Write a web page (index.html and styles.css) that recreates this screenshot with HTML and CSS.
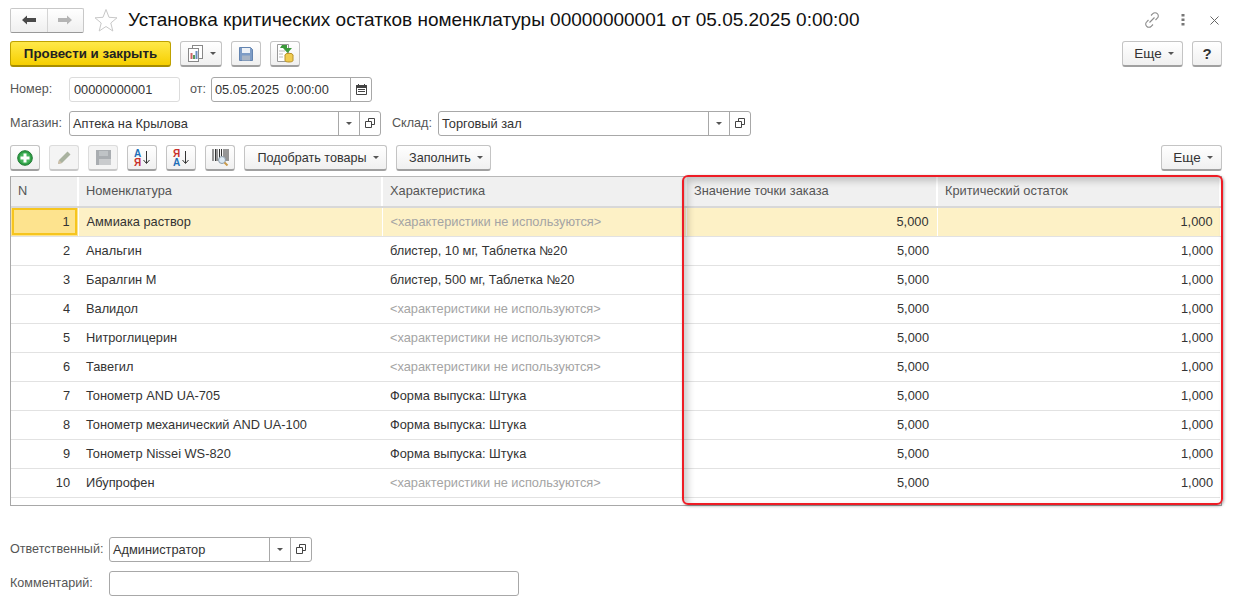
FILE: index.html
```html
<!DOCTYPE html>
<html lang="en">
<head>
  <meta charset="UTF-8">
  <title>Установка критических остатков номенклатуры</title>
  <link rel="stylesheet" href="styles.css">
</head>
<body>
<div class="page">
  <svg width="0" height="0" class="defs">
    <symbol id="open" viewBox="0 0 12 12"><path d="M4.500 4V1.500h6v6H8M1.500 4.500h6v6h-6z" fill="none" stroke="#444" stroke-width="1"/></symbol>
  </svg>

  <div class="titlebar">
    <div class="nav">
      <span class="nav-btn"><svg width="16" height="12" viewBox="0 0 16 12"><path d="M1 6l5-4.500V4h9v4H6v2.500z" fill="#4a4a4a"/></svg></span>
      <span class="nav-btn"><svg width="16" height="12" viewBox="0 0 16 12"><path d="M15 6l-5-4.500V4H1v4h9v2.500z" fill="#b4b4b4"/></svg></span>
    </div>
    <svg class="star" width="24" height="24" viewBox="0 0 24 24"><path d="M12 1.500l3 7.800 8 .5-6.200 5.200 2 8L12 18.500 5.200 23l2-8L1 9.800l8-.5z" fill="#fff" stroke="#c8c8c8"/></svg>
    <h1>Установка критических остатков номенклатуры 00000000001 от 05.05.2025 0:00:00</h1>
    <div class="window-icons">
      <svg class="link-icon" width="16" height="16" viewBox="0 0 16 16"><path d="M5.500 10.500l5-5M7 3.500l1.800-1.800a3 3 0 0 1 4.500 0 3 3 0 0 1 0 4.500L11.500 8M9 12.500l-1.800 1.800a3 3 0 0 1-4.500 0 3 3 0 0 1 0-4.500L4.500 8" fill="none" stroke="#8c8c8c" stroke-width="1.100"/></svg>
      <svg class="dots-icon" width="4" height="12" viewBox="0 0 4 12"><path d="M.500 0h3v2.500h-3zM.500 4.500h3V7h-3zM.500 9h3v2.500h-3z" fill="#777"/></svg>
      <svg class="close-icon" width="9" height="9" viewBox="0 0 9 9"><path d="M.500.500l8 8M8.500.500l-8 8" stroke="#666"/></svg>
    </div>
  </div>

  <div class="bar command-bar">
    <button class="btn primary">Провести и закрыть</button>
    <button class="btn icon-menu">
      <svg width="17" height="17" viewBox="0 0 17 17"><rect x="5.500" y=".5" width="10" height="13" fill="#fff" stroke="#888"/><rect x="1.500" y="3.500" width="10" height="13" fill="#fff" stroke="#888"/><path d="M3.500 8h2v6h-2z" fill="#c66"/><path d="M6 10h2v4H6z" fill="#5a9a5a"/><path d="M8.500 6h2v8h-2z" fill="#6a8ec0"/></svg>
      <i class="caret"></i>
    </button>
    <button class="btn icon-btn">
      <svg width="14" height="14" viewBox="0 0 14 14"><path d="M.5.500h11l2 2v11H.5z" fill="#7d9cc6" stroke="#6384b0"/><rect x="3" y="1" width="8" height="5" fill="#eef2f7"/><rect x="3" y="8.500" width="8" height="5" fill="#a8b4c4"/></svg>
    </button>
    <button class="btn icon-btn">
      <svg width="18" height="19" viewBox="0 0 18 19"><path d="M1.500.500h11v17h-11z" fill="#fff" stroke="#999"/><path d="M3 7h6M3 10h4M3 13h4" stroke="#bbb"/><path d="M6 1h5v3h5l-4.500 5L7 4H4z" fill="#3c9a3c"/><ellipse cx="13" cy="11" rx="4" ry="1.700" fill="#f0cc50" stroke="#b8922a"/><path d="M9 11v5.500c0 2 8 2 8 0V11" fill="#f0cc50" stroke="#b8922a"/></svg>
    </button>
    <div class="bar-right">
      <button class="btn more">Еще<i class="caret"></i></button>
      <button class="btn help">?</button>
    </div>
  </div>

  <div class="form-row number-row">
    <label class="label label-number">Номер:</label>
    <span class="field field-number">00000000001</span>
    <label class="label label-from">от:</label>
    <span class="field field-date">
      <span class="field-value">05.05.2025&nbsp; 0:00:00</span>
      <span class="field-btn date-btn"><svg width="11" height="11" viewBox="0 0 11 11"><path d="M.5 1.500h10v9H.5z" fill="#fff" stroke="#444"/><path d="M.5 1.500h10v2H.5zM2.500 0v2M8.500 0v2" fill="#444" stroke="#444"/><path d="M2 5h7v1H2zM2 7h7v1H2z" fill="#444"/></svg></span>
    </span>
  </div>

  <div class="form-row store-row">
    <label class="label label-store">Магазин:</label>
    <span class="field field-store">
      <span class="field-value">Аптека на Крылова</span>
      <span class="field-btn"><i class="caret"></i></span>
      <span class="field-btn"><svg width="12" height="12"><use href="#open"/></svg></span>
    </span>
    <label class="label label-stock">Склад:</label>
    <span class="field field-stock">
      <span class="field-value">Торговый зал</span>
      <span class="field-btn"><i class="caret"></i></span>
      <span class="field-btn"><svg width="12" height="12"><use href="#open"/></svg></span>
    </span>
  </div>

  <div class="bar table-bar">
    <button class="btn icon-btn">
      <svg width="16" height="16" viewBox="0 0 16 16"><circle cx="8" cy="8" r="7.300" fill="#2f9e46" stroke="#1f7a33"/><circle cx="8" cy="8" r="5.500" fill="#45b45c"/><path d="M6.500 3.500h3v3h3v3h-3v3h-3v-3h-3v-3h3z" fill="#fff"/></svg>
    </button>
    <button class="btn icon-btn disabled">
      <svg width="16" height="16" viewBox="0 0 16 16"><path d="M11.500 1.500l3 3-8.500 8.500-4 1 1-4z" fill="#a9b29f"/><path d="M2 14l1-4 3 3z" fill="#cfbfa8"/></svg>
    </button>
    <button class="btn icon-btn disabled">
      <svg width="15" height="15" viewBox="0 0 15 15"><path d="M0 0h15v15H0z" fill="#a9adb1"/><rect x="3" y="1" width="9" height="5" fill="#bfc3c6"/><rect x="3" y="9" width="12" height="6" fill="#c9cbcd"/></svg>
    </button>
    <button class="btn icon-btn sort">
      <span class="sort-letters"><b class="blue">А</b><b class="red">Я</b></span>
      <svg width="7" height="13" viewBox="0 0 7 13"><path d="M3.500 0v12M.5 9l3 3.500 3-3.500" fill="none" stroke="#333"/></svg>
    </button>
    <button class="btn icon-btn sort">
      <span class="sort-letters"><b class="red">Я</b><b class="blue">А</b></span>
      <svg width="7" height="13" viewBox="0 0 7 13"><path d="M3.500 0v12M.5 9l3 3.500 3-3.500" fill="none" stroke="#333"/></svg>
    </button>
    <button class="btn icon-btn">
      <svg width="17" height="17" viewBox="0 0 17 17"><path d="M1 0v12M3.500 0v12M5 0v12M7.500 0v9M9.500 0v7M12 0v8M14 0v12M16 0v12" stroke="#333" fill="none"/><circle cx="10" cy="11" r="3.500" fill="#dbe8f2" stroke="#8a9aa8"/><path d="M12.500 13.500l3 3" stroke="#c99a4a" stroke-width="2"/></svg>
    </button>
    <button class="btn text-btn pick">Подобрать товары<i class="caret"></i></button>
    <button class="btn text-btn fill">Заполнить<i class="caret"></i></button>
    <div class="bar-right">
      <button class="btn more">Еще<i class="caret"></i></button>
    </div>
  </div>

  <div class="table-wrap">
    <table class="grid">
      <colgroup>
        <col class="col-n"><col class="col-name"><col class="col-char"><col class="col-point"><col class="col-crit">
      </colgroup>
      <thead>
        <tr><th>N</th><th>Номенклатура</th><th>Характеристика</th><th>Значение точки заказа</th><th>Критический остаток</th></tr>
      </thead>
      <tbody>
        <tr class="current"><td class="num active">1</td><td>Аммиака раствор</td><td class="muted">&lt;характеристики не используются&gt;</td><td class="num">5,000</td><td class="num">1,000</td></tr>
        <tr><td class="num">2</td><td>Анальгин</td><td>блистер, 10 мг, Таблетка №20</td><td class="num">5,000</td><td class="num">1,000</td></tr>
        <tr><td class="num">3</td><td>Баралгин М</td><td>блистер, 500 мг, Таблетка №20</td><td class="num">5,000</td><td class="num">1,000</td></tr>
        <tr><td class="num">4</td><td>Валидол</td><td class="muted">&lt;характеристики не используются&gt;</td><td class="num">5,000</td><td class="num">1,000</td></tr>
        <tr><td class="num">5</td><td>Нитроглицерин</td><td class="muted">&lt;характеристики не используются&gt;</td><td class="num">5,000</td><td class="num">1,000</td></tr>
        <tr><td class="num">6</td><td>Тавегил</td><td class="muted">&lt;характеристики не используются&gt;</td><td class="num">5,000</td><td class="num">1,000</td></tr>
        <tr><td class="num">7</td><td>Тонометр AND UA-705</td><td>Форма выпуска: Штука</td><td class="num">5,000</td><td class="num">1,000</td></tr>
        <tr><td class="num">8</td><td>Тонометр механический AND UA-100</td><td>Форма выпуска: Штука</td><td class="num">5,000</td><td class="num">1,000</td></tr>
        <tr><td class="num">9</td><td>Тонометр Nissei WS-820</td><td>Форма выпуска: Штука</td><td class="num">5,000</td><td class="num">1,000</td></tr>
        <tr><td class="num">10</td><td>Ибупрофен</td><td class="muted">&lt;характеристики не используются&gt;</td><td class="num">5,000</td><td class="num">1,000</td></tr>
      </tbody>
    </table>
    <div class="highlight"></div>
  </div>

  <div class="form-row owner-row">
    <label class="label label-owner">Ответственный:</label>
    <span class="field field-owner">
      <span class="field-value">Администратор</span>
      <span class="field-btn"><i class="caret"></i></span>
      <span class="field-btn"><svg width="12" height="12"><use href="#open"/></svg></span>
    </span>
  </div>

  <div class="form-row comment-row">
    <label class="label label-owner">Комментарий:</label>
    <span class="field field-comment"></span>
  </div>
</div>
</body>
</html>
```

FILE: styles.css
```css
* {
  box-sizing: border-box;
  margin: 0;
  padding: 0;
}

html, body {
  height: 100%;
  background: #fff;
}

body {
  font-family: "Liberation Sans", Arial, sans-serif;
  font-size: 12.8px;
  color: #333;
  overflow: hidden;
}

.defs {
  display: block;
  height: 0;
}

.page {
  padding: 7px 17px 0 10px;
}

/* title */
.titlebar {
  display: flex;
  align-items: center;
  height: 26px;
}

.nav {
  display: flex;
  width: 74px;
  height: 25px;
  background: linear-gradient(#fff, #efefef);
  border: 1px solid #c8c8c8;
  border-bottom-color: #999;
  border-radius: 2px;
}

.nav-btn {
  flex: 1;
  display: flex;
  align-items: center;
  justify-content: center;
}

.nav-btn + .nav-btn {
  border-left: 1px solid #d4d4d4;
}

.star {
  margin-left: 10px;
}

h1 {
  margin-left: 10px;
  font-size: 19px;
  font-weight: normal;
  color: #111;
  white-space: nowrap;
}

.window-icons {
  display: flex;
  align-items: center;
  gap: 21px;
  margin-left: auto;
  padding-right: 3px;
}

.close-icon {
  margin-left: 4px;
}

/* buttons */
.bar {
  display: flex;
  align-items: center;
  height: 26px;
}

.bar-right {
  display: flex;
  gap: 9px;
  margin-left: auto;
}

.btn {
  display: flex;
  align-items: center;
  justify-content: center;
  height: 26px;
  font-family: inherit;
  font-size: 12.6px;
  color: #333;
  background: linear-gradient(#fff, #f0f0f0);
  border: 1px solid #c4c4c4;
  border-bottom: 2px solid #a0a0a0;
  border-radius: 3px;
}

.primary {
  width: 161px;
  font-size: 13.3px;
  font-weight: bold;
  color: #222;
  background: linear-gradient(#ffe94a, #f6cf00);
  border-color: #bfa200;
  border-bottom-color: #a88e00;
}

.icon-btn {
  width: 30px;
}

.icon-menu {
  width: 42px;
  gap: 6px;
}

.command-bar {
  margin-top: 8px;
}

.command-bar .btn + .btn {
  margin-left: 9px;
}

.command-bar .bar-right .btn {
  margin-left: 0;
}

.more {
  width: 61px;
  gap: 6px;
  padding-left: 3px;
  font-size: 13.5px;
}

.help {
  width: 30px;
  font-size: 15px;
  font-weight: bold;
}

.caret {
  display: inline-block;
  width: 0;
  height: 0;
  border-left: 3px solid transparent;
  border-right: 3px solid transparent;
  border-top: 3px solid #555;
}

.table-bar {
  margin-top: 9px;
}

.table-bar .icon-btn {
  margin-right: 9px;
}

.table-bar .bar-right .btn {
  margin-right: 0;
}

.text-btn {
  gap: 6px;
  padding-left: 5px;
}

.pick {
  width: 143px;
  margin-right: 9px;
}

.fill {
  width: 95px;
}

.disabled {
  background: #f4f4f4;
  border-color: #dcdcdc;
  border-bottom-color: #c8c8c8;
}

.sort {
  gap: 2px;
}

.sort-letters {
  display: flex;
  flex-direction: column;
  font-size: 10px;
  line-height: 9px;
}

.sort-letters b {
  font-weight: bold;
}

.blue {
  color: #1e6fb8;
}

.red {
  color: #c8302c;
}

/* form rows */
.form-row {
  display: flex;
  align-items: center;
  height: 26px;
}

.number-row {
  margin-top: 9px;
}

.store-row {
  margin-top: 8px;
}

.owner-row {
  margin-top: 30px;
}

.comment-row {
  margin-top: 8px;
}

.label {
  font-size: 12.6px;
  color: #555;
  white-space: nowrap;
}

.label-number,
.label-store {
  width: 59px;
}

.label-from {
  width: 21px;
  margin-left: 10px;
}

.label-stock {
  width: 46px;
  margin-left: 11px;
}

.label-owner {
  width: 99px;
}

.field {
  display: flex;
  align-items: stretch;
  height: 25px;
  line-height: 23px;
  color: #333;
  background: #fff;
  border: 1px solid #a8a8a8;
  border-radius: 3px;
}

.field-value {
  flex: 1;
  padding-left: 3px;
  white-space: nowrap;
  overflow: hidden;
}

.field-btn {
  display: flex;
  align-items: center;
  justify-content: center;
  width: 21px;
  border-left: 1px solid #a8a8a8;
}

.field-number {
  width: 111px;
  padding-left: 4px;
  border-color: #dcdcdc;
}

.field-date {
  width: 161px;
}

.field-store {
  width: 312px;
}

.field-stock {
  width: 313px;
}

.field-owner {
  width: 203px;
}

.field-comment {
  width: 410px;
}

/* table */
.table-wrap {
  position: relative;
  margin-top: 5px;
  height: 330px;
  border: 1px solid #a8a8a8;
  border-top-color: #b8b8b8;
}

.grid {
  width: 100%;
  table-layout: fixed;
  border-collapse: collapse;
}

.col-n { width: 67px; }
.col-name { width: 304px; }
.col-char { width: 304px; }
.col-point { width: 251px; }

.grid th {
  height: 30px;
  padding: 0 7px 2px;
  text-align: left;
  font-weight: normal;
  color: #555;
  background: #f0f0f0;
  border-right: 2px solid #fff;
  border-bottom: 2px solid #d8d8d8;
  white-space: nowrap;
}

.grid td {
  height: 29px;
  padding: 0 8px;
  border-bottom: 1px solid #e2e2e2;
  white-space: nowrap;
  overflow: hidden;
}

.grid td.num {
  text-align: right;
}

.grid td:last-child {
  padding-right: 7px;
}

.grid td.muted {
  color: #a4a4a4;
}

.current td {
  background: #fdf1c6;
  border-right: 1px solid #fff;
}

.current td.active {
  background: #fde38e;
  outline: 2px solid #f6c51e;
  outline-offset: -3px;
}

.highlight {
  position: absolute;
  left: 671px;
  top: -2px;
  width: 541px;
  height: 330px;
  border: 2px solid #ee1c25;
  border-radius: 6px;
  box-shadow: inset 4px 4px 7px rgba(0, 0, 0, 0.2), 1px 1px 3px rgba(0, 0, 0, 0.35);
  pointer-events: none;
}
```
